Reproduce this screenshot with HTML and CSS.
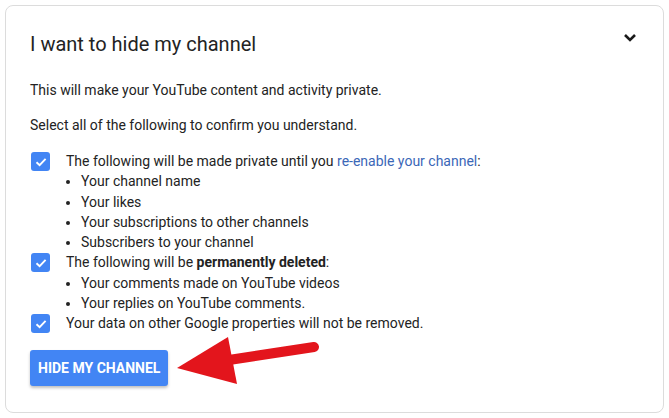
FILE: index.html
```html
<!DOCTYPE html>
<html>
<head>
    <title>Hide channel</title>
    <link rel="stylesheet" href="styles.css">
</head>
<body>
    <div class="card">
        <div class="card-head">
            <h2>I want to hide my channel</h2>
            <svg class="chevron" width="14" height="10" viewBox="0 0 14 10">
                <path d="M2 2 L7 7 L12 2" fill="none" stroke="#1a1a1a" stroke-width="2.6"/>
            </svg>
        </div>
        <p class="intro">This will make your YouTube content and activity private.</p>
        <p class="intro">Select all of the following to confirm you understand.</p>

        <div class="check-row">
            <span class="box"><svg width="14" height="14" viewBox="0 0 14 14"><path d="M2.5 7.2 L5.6 10.2 L11.6 3.8" fill="none" stroke="#fff" stroke-width="1.9"/></svg></span>
            <div class="check-text">
                The following will be made private until you <a href="#">re-enable your channel</a>:
                <ul>
                    <li>Your channel name</li>
                    <li>Your likes</li>
                    <li>Your subscriptions to other channels</li>
                    <li>Subscribers to your channel</li>
                </ul>
            </div>
        </div>
        <div class="check-row">
            <span class="box"><svg width="14" height="14" viewBox="0 0 14 14"><path d="M2.5 7.2 L5.6 10.2 L11.6 3.8" fill="none" stroke="#fff" stroke-width="1.9"/></svg></span>
            <div class="check-text">
                The following will be <strong>permanently deleted</strong>:
                <ul>
                    <li>Your comments made on YouTube videos</li>
                    <li>Your replies on YouTube comments.</li>
                </ul>
            </div>
        </div>
        <div class="check-row">
            <span class="box"><svg width="14" height="14" viewBox="0 0 14 14"><path d="M2.5 7.2 L5.6 10.2 L11.6 3.8" fill="none" stroke="#fff" stroke-width="1.9"/></svg></span>
            <div class="check-text">Your data on other Google properties will not be removed.</div>
        </div>

        <div class="actions">
            <button>Hide my channel</button>
            <!-- red annotation arrow pointing at the button -->
            <svg class="arrow" width="160" height="64" viewBox="0 0 160 64">
                <path d="M54 32 L139 19" stroke="#e3151c" stroke-width="10" stroke-linecap="round"/>
                <polygon points="2,40 53,9 62,56" fill="#e3151c"/>
            </svg>
        </div>
    </div>
</body>
</html>
```

FILE: styles.css
```css
body {
    margin: 0;
    padding: 5px;
    background-color: #fff;
    font-family: Roboto, "Liberation Sans", sans-serif;
    color: #232323;
}
.card {
    border: 1px solid #dcdcdc;
    border-radius: 8px;
    padding: 0 24px 26px 24px;
    height: 408px;
    box-sizing: border-box;
}
.card-head {
    display: flex;
    justify-content: space-between;
    align-items: center;
    padding-top: 24px;
}
.card-head h2 {
    margin: 0;
    font-size: 20px;
    font-weight: 400;
    line-height: 28px;
}
.chevron {
    margin-right: 2px;
    margin-top: -12px;
}
.intro {
    margin: 0;
    font-size: 14px;
    line-height: 20px;
    margin-top: 15px;
}
.card-head + .intro {
    margin-top: 22px;
}
.check-row {
    display: flex;
    align-items: flex-start;
    font-size: 14px;
    line-height: 20.3px;
}
.intro + .check-row {
    margin-top: 16px;
}
.box {
    width: 19px;
    height: 19px;
    border-radius: 3px;
    background-color: #4285f4;
    display: flex;
    align-items: center;
    justify-content: center;
    margin: 1px 16px 0 1px;
    flex-shrink: 0;
}
.check-text a {
    color: #3b67b7;
    text-decoration: none;
}
.check-text strong {
    font-weight: 700;
}
ul {
    margin: 0;
    padding-left: 15px;
}
li::marker {
    font-size: 13px;
}
.actions {
    position: relative;
    margin-top: 16px;
}
button {
    background-color: #4285f4;
    color: #fff;
    border: none;
    border-radius: 3px;
    font-family: Roboto, "Liberation Sans", sans-serif;
    font-size: 14px;
    font-weight: 700;
    text-transform: uppercase;
    padding: 0 8px;
    height: 36px;
    box-shadow: 0 2px 3px rgba(0,0,0,0.25);
    cursor: pointer;
}
.arrow {
    position: absolute;
    left: 145px;
    top: -22px;
}
```
